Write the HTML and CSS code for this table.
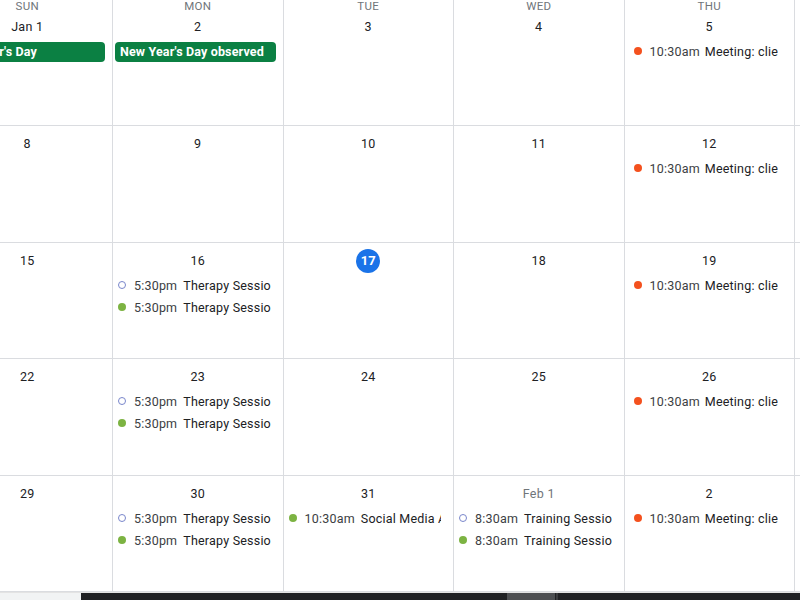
FILE: index.html
```html
<!DOCTYPE html>
<html lang="en">
<head>
<meta charset="utf-8">
<title>Calendar – January</title>
<link rel="stylesheet" href="styles.css">
</head>
<body>
<div class="viewport">
  <div class="month">
    <!-- Row 1 -->
    <div class="cell first"><div class="dow">SUN</div><div class="date"><span>Jan 1</span></div>
      <div class="chip-row"><div class="chip">New Year's Day</div></div></div>
    <div class="cell first"><div class="dow">MON</div><div class="date"><span>2</span></div>
      <div class="chip-row"><div class="chip">New Year's Day observed</div></div></div>
    <div class="cell first"><div class="dow">TUE</div><div class="date"><span>3</span></div></div>
    <div class="cell first"><div class="dow">WED</div><div class="date"><span>4</span></div></div>
    <div class="cell first thu"><div class="dow">THU</div><div class="date"><span>5</span></div>
      <div class="event"><i class="dot orange"></i><span class="time">10:30am</span><span class="title">Meeting: client call</span></div></div>
    <div class="cell first"><div class="dow">FRI</div><div class="date"><span>6</span></div></div>

    <!-- Row 2 -->
    <div class="cell"><div class="date"><span>8</span></div></div>
    <div class="cell"><div class="date"><span>9</span></div></div>
    <div class="cell"><div class="date"><span>10</span></div></div>
    <div class="cell"><div class="date"><span>11</span></div></div>
    <div class="cell thu"><div class="date"><span>12</span></div>
      <div class="event"><i class="dot orange"></i><span class="time">10:30am</span><span class="title">Meeting: client call</span></div></div>
    <div class="cell"><div class="date"><span>13</span></div></div>

    <!-- Row 3 -->
    <div class="cell"><div class="date"><span>15</span></div></div>
    <div class="cell"><div class="date"><span>16</span></div>
      <div class="event"><i class="dot hollow"></i><span class="time">5:30pm</span><span class="title">Therapy Session</span></div>
      <div class="event"><i class="dot green"></i><span class="time">5:30pm</span><span class="title">Therapy Session</span></div></div>
    <div class="cell"><div class="date"><span class="today">17</span></div></div>
    <div class="cell"><div class="date"><span>18</span></div></div>
    <div class="cell thu"><div class="date"><span>19</span></div>
      <div class="event"><i class="dot orange"></i><span class="time">10:30am</span><span class="title">Meeting: client call</span></div></div>
    <div class="cell"><div class="date"><span>20</span></div></div>

    <!-- Row 4 -->
    <div class="cell"><div class="date"><span>22</span></div></div>
    <div class="cell"><div class="date"><span>23</span></div>
      <div class="event"><i class="dot hollow"></i><span class="time">5:30pm</span><span class="title">Therapy Session</span></div>
      <div class="event"><i class="dot green"></i><span class="time">5:30pm</span><span class="title">Therapy Session</span></div></div>
    <div class="cell"><div class="date"><span>24</span></div></div>
    <div class="cell"><div class="date"><span>25</span></div></div>
    <div class="cell thu"><div class="date"><span>26</span></div>
      <div class="event"><i class="dot orange"></i><span class="time">10:30am</span><span class="title">Meeting: client call</span></div></div>
    <div class="cell"><div class="date"><span>27</span></div></div>

    <!-- Row 5 -->
    <div class="cell"><div class="date"><span>29</span></div></div>
    <div class="cell"><div class="date"><span>30</span></div>
      <div class="event"><i class="dot hollow"></i><span class="time">5:30pm</span><span class="title">Therapy Session</span></div>
      <div class="event"><i class="dot green"></i><span class="time">5:30pm</span><span class="title">Therapy Session</span></div></div>
    <div class="cell"><div class="date"><span>31</span></div>
      <div class="event"><i class="dot green"></i><span class="time">10:30am</span><span class="title">Social Media Audit</span></div></div>
    <div class="cell"><div class="date"><span class="other">Feb 1</span></div>
      <div class="event"><i class="dot hollow"></i><span class="time">8:30am</span><span class="title">Training Session</span></div>
      <div class="event"><i class="dot green"></i><span class="time">8:30am</span><span class="title">Training Session</span></div></div>
    <div class="cell thu"><div class="date"><span>2</span></div>
      <div class="event"><i class="dot orange"></i><span class="time">10:30am</span><span class="title">Meeting: client call</span></div></div>
    <div class="cell"><div class="date"><span>3</span></div></div>
  </div>
  <div class="footer">
    <div class="foot-light"></div>
    <div class="foot-dark">
      <div class="foot-thumb"></div>
      <div class="foot-tick"></div>
    </div>
  </div>
</div>
</body>
</html>
```

FILE: styles.css
```css
* { box-sizing: border-box; }

html, body {
  margin: 0;
  padding: 0;
  background: #ffffff;
  overflow: hidden;
}

body {
  font-family: Roboto, "Liberation Sans", Arial, sans-serif;
  color: #3c4043;
  width: 800px;
  height: 600px;
}

.viewport {
  width: 800px;
  height: 600px;
  overflow: hidden;
  display: flex;
  flex-direction: column;
}

.month {
  display: grid;
  grid-template-columns: repeat(6, 170.5px);
  grid-template-rows: 126px 117px 116px 117px 116px;
  margin-left: -57.5px;
  width: 1023px;
  flex: none;
}

.cell {
  border-right: 1px solid #dadce0;
  border-bottom: 1px solid #dadce0;
  overflow: hidden;
  min-width: 0;
}

.dow {
  height: 12px;
  line-height: 12px;
  font-size: 11.5px;
  font-weight: 400;
  color: #70757a;
  text-align: center;
  letter-spacing: 0.3px;
}

.date {
  height: 24px;
  margin-top: 6px;
  margin-bottom: 1px;
  display: flex;
  justify-content: center;
}

.first .date { margin-top: 3px; }

.date span {
  display: inline-block;
  min-width: 24px;
  height: 24px;
  line-height: 24px;
  padding: 0 2px;
  text-align: center;
  font-size: 12.5px;
  font-weight: 400;
  letter-spacing: 0.3px;
  color: #202124;
  border-radius: 12px;
}

.date span.today {
  background: #1a73e8;
  color: #ffffff;
  font-weight: 700;
  font-size: 13px;
  letter-spacing: 0;
}

.date span.other { color: #70757a; }

.chip-row {
  height: 22px;
  padding: 2px 7px 0 2px;
}

.chip {
  height: 20px;
  line-height: 20px;
  background: #0b8043;
  color: #ffffff;
  font-size: 12.5px;
  font-weight: 700;
  border-radius: 4px;
  padding: 0 5px;
  white-space: nowrap;
  overflow: hidden;
  letter-spacing: 0.15px;
}

.event {
  height: 22px;
  display: flex;
  align-items: center;
  margin: 0 12px 0 5px;
  white-space: nowrap;
  overflow: hidden;
  font-size: 12.5px;
  letter-spacing: 0.2px;
}

.thu .event { margin-left: 9px; margin-right: 16px; }

.dot {
  flex: none;
  width: 8px;
  height: 8px;
  border-radius: 50%;
  margin-right: 8px;
}

.dot.orange { background: #f4511e; }
.dot.green { background: #7cb342; }
.dot.hollow {
  border: 1px solid #7986cb;
  background: #ffffff;
}

.time {
  color: #3c4043;
  margin-right: 6px;
  flex: none;
}

.thu .time { margin-right: 5px; }

.title {
  color: #202124;
  font-weight: 400;
  flex: none;
}

.footer {
  flex: none;
  height: 8px;
  display: flex;
  border-top: 1px solid #e3e3e3;
}

.foot-light {
  width: 81px;
  background: #f1f3f4;
}

.foot-dark {
  flex: 1;
  background: #202124;
  display: flex;
  padding-left: 426px;
}

.foot-thumb {
  width: 48px;
  background: #4d4f52;
}

.foot-tick {
  width: 2px;
  margin-left: 1px;
  background: #3a3b3e;
}
```
